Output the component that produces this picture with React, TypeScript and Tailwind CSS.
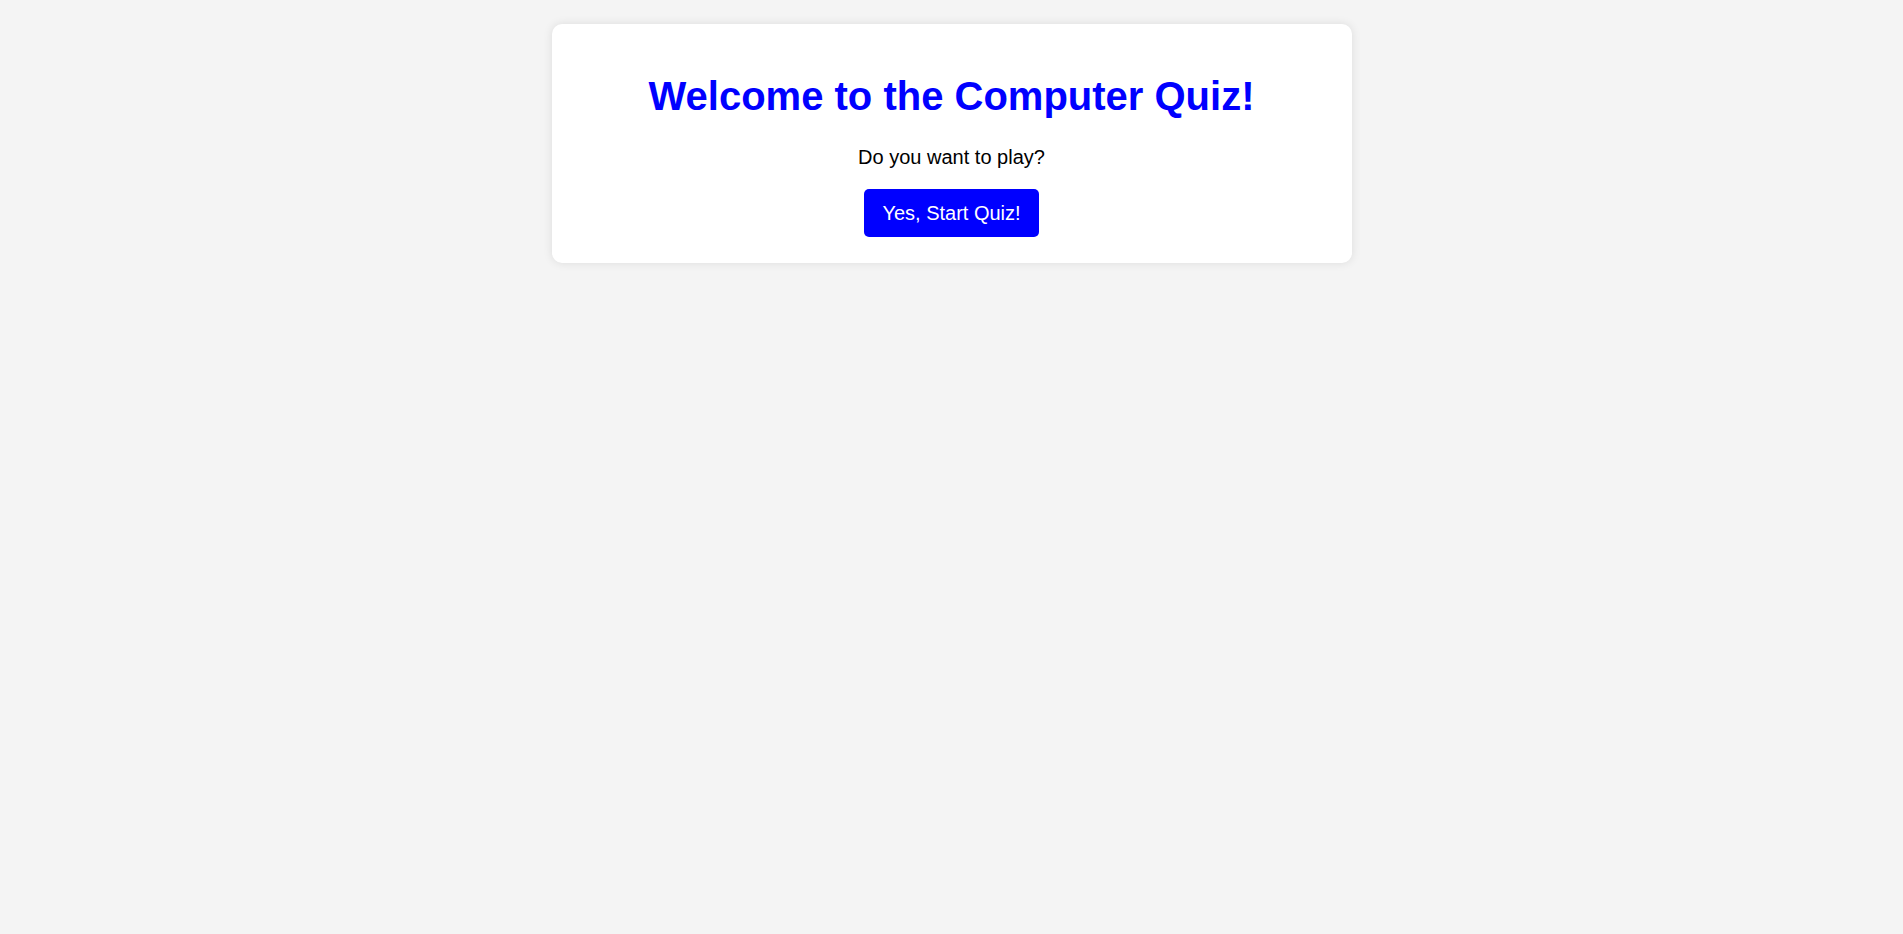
export default function App() {
  return (
    <div className="min-h-[934px] w-full bg-[#f4f4f4] pt-[24px] font-['Liberation_Sans',Arial,sans-serif]">
      <div className="mx-auto w-[800px] rounded-[10px] bg-white px-[20px] pt-[49px] pb-[26px] text-center shadow-[0_0_10px_rgba(0,0,0,0.1)]">
        <h1 className="m-0 text-[40px] leading-[46px] font-bold text-[#0000ff]">
          Welcome to the Computer Quiz!
        </h1>
        <p className="mt-[27px] text-[20px] leading-[23px] text-black">Do you want to play?</p>
        <button className="mt-[20px] inline-flex h-[48px] items-center rounded-[5px] bg-[#0000ff] px-[18px] text-[20px] leading-[23px] text-white">
          Yes, Start Quiz!
        </button>
      </div>
    </div>
  );
}
